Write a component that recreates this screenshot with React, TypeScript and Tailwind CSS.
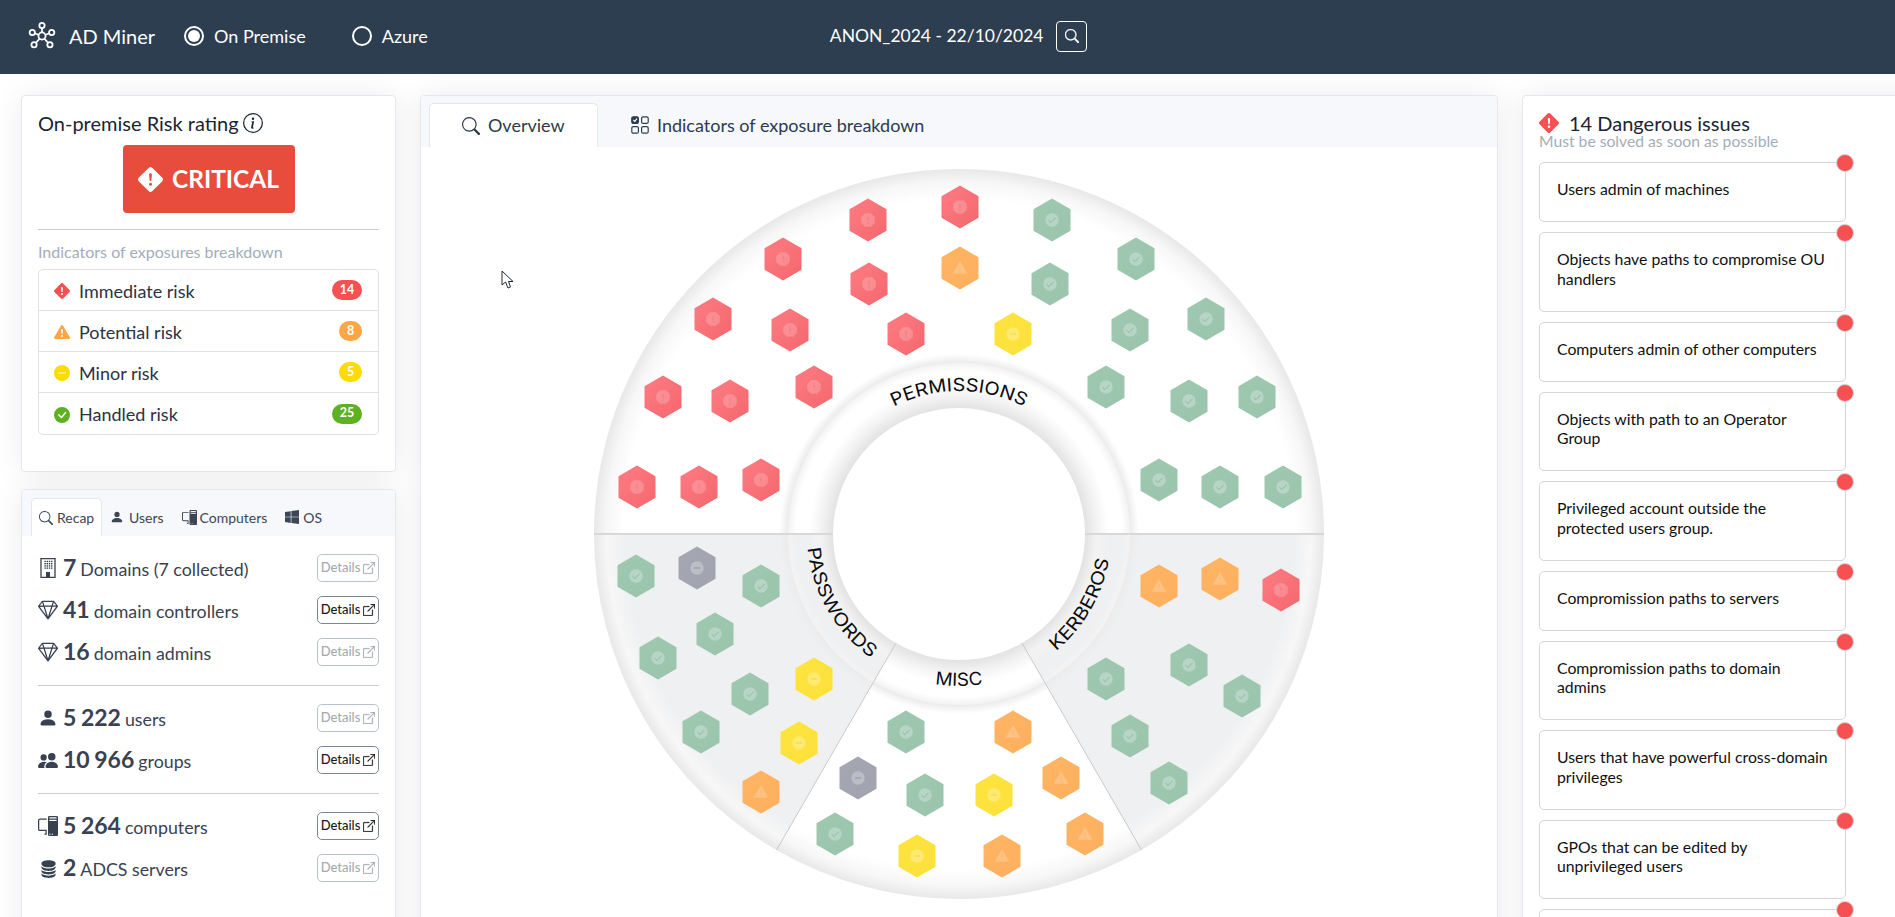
import React from "react";
import {
  BsBoxArrowUpRight, BsCheckCircleFill, BsDashCircleFill, BsDatabaseFill, BsExclamationDiamondFill,
  BsExclamationTriangleFill, BsGem, BsInfoCircle, BsPcDisplay, BsPeopleFill, BsPersonFill, BsSearch, BsWindows,
} from "react-icons/bs";

type Kind = "red" | "orange" | "yellow" | "green" | "gray";
const C = 365;
const hexes: [number, number, Kind][] = [
  [867, 220, "red"], [782, 259, "red"], [868, 284, "red"], [712, 319, "red"], [789, 330, "red"], [905, 334, "red"],
  [662, 397, "red"], [729, 401, "red"], [813, 387, "red"], [636, 487, "red"], [698, 487, "red"], [760, 480, "red"],
  [959, 207, "red"], [959, 268, "orange"], [1012, 334, "yellow"],
  [1051, 220, "green"], [1049, 284, "green"], [1135, 259, "green"], [1205, 319, "green"], [1129, 330, "green"],
  [1105, 387, "green"], [1188, 401, "green"], [1256, 397, "green"], [1158, 480, "green"], [1219, 487, "green"], [1282, 487, "green"],
  [635, 576, "green"], [696, 568, "gray"], [760, 586, "green"], [714, 634, "green"], [657, 658, "green"], [749, 694, "green"],
  [813, 679, "yellow"], [700, 732, "green"], [798, 743, "yellow"], [760, 792, "orange"],
  [905, 732, "green"], [857, 778, "gray"], [924, 795, "green"], [834, 834, "green"], [916, 856, "yellow"], [993, 795, "yellow"],
  [1012, 732, "orange"], [1060, 778, "orange"], [1084, 834, "orange"], [1001, 856, "orange"],
  [1158, 586, "orange"], [1219, 579, "orange"], [1280, 590, "red"], [1105, 679, "green"], [1188, 665, "green"],
  [1241, 696, "green"], [1129, 736, "green"], [1168, 783, "green"],
];
const dark: Record<Kind, string> = { red: "#f37a82", orange: "#f8b76f", yellow: "#f2d84a", green: "#8ebba2", gray: "#8f929e" };

function Glyph({ kind }: { kind: Kind }) {
  if (kind === "orange")
    return (
      <g>
        <path d="M0 -6.5 L7 5.5 L-7 5.5 Z" fill="#fff" opacity="0.22" strokeLinejoin="round" stroke="#fff" strokeOpacity="0.22" strokeWidth="1.5" />
        <path d="M0 -2 V2 M0 3.4 V4.6" stroke={dark.orange} strokeWidth="1" />
      </g>
    );
  if (kind === "red")
    return (
      <g>
        <path d="M-3 -6.8 H3 L6.8 -3 V3 L3 6.8 H-3 L-6.8 3 V-3 Z" fill="#fff" opacity="0.2" />
        <path d="M0 -3.4 V1 M0 2.4 V3.6" stroke={dark.red} strokeWidth="1" />
      </g>
    );
  return (
    <g>
      <circle r="6.7" fill="#fff" opacity="0.27" />
      {kind === "green" ? (
        <path d="M-3.5 0.2 L-1 2.6 L3.5 -2.2" fill="none" stroke={dark.green} strokeWidth="1" />
      ) : (
        <path d="M-3 0 H3" stroke={dark[kind]} strokeWidth="1" />
      )}
    </g>
  );
}

const rad = (d: number) => (d * Math.PI) / 180;
function sector(d0: number, d1: number, r0: number, r1: number) {
  const a0 = rad(d0);
  const a1 = rad(d1);
  const p = (r: number, a: number) => `${C + r * Math.cos(a)} ${C + r * Math.sin(a)}`;
  return `M${p(r1, a0)} A${r1} ${r1} 0 0 1 ${p(r1, a1)} L${p(r0, a1)} A${r0} ${r0} 0 0 0 ${p(r0, a0)} Z`;
}

function gradStops(base: string) {
  return (
    <>
      <stop offset={126 / C} stopColor="#e3e3e3" />
      <stop offset={138 / C} stopColor="#f3f3f3" />
      <stop offset={150 / C} stopColor={base} />
      <stop offset={163 / C} stopColor={base} />
      <stop offset={170.5 / C} stopColor="#f3f3f3" />
      <stop offset={171.5 / C} stopColor="#ececec" />
      <stop offset={180 / C} stopColor={base} />
      <stop offset={335 / C} stopColor={base} />
      <stop offset={352 / C} stopColor="#f7f7f7" />
      <stop offset={1} stopColor="#e8e8e8" />
    </>
  );
}

function Wheel() {
  const arc = (r: number, a0: number, a1: number, sweep: number) =>
    `M${C + r * Math.cos(rad(a0))} ${C + r * Math.sin(rad(a0))} A${r} ${r} 0 0 ${sweep} ${C + r * Math.cos(rad(a1))} ${C + r * Math.sin(rad(a1))}`;
  const pts = "0,-21.5 18.5,-10.7 18.5,10.7 0,21.5 -18.5,10.7 -18.5,-10.7";
  const grads: [Kind, string, string][] = [
    ["red", "#fd7c84", "#f4676c"], ["orange", "#ffb564", "#fdb05e"], ["yellow", "#fde440", "#fde03a"],
    ["green", "#9fc8b0", "#9bc4ac"], ["gray", "#a4a7b2", "#a1a4af"],
  ];
  return (
    <svg width="730" height="730" viewBox="0 0 730 730" className="shrink-0 overflow-visible">
      <defs>
        <radialGradient id="gw" gradientUnits="userSpaceOnUse" cx={C} cy={C} r={C}>{gradStops("#ffffff")}</radialGradient>
        <radialGradient id="gg" gradientUnits="userSpaceOnUse" cx={C} cy={C} r={C}>{gradStops("#eff0f2")}</radialGradient>
        {grads.map(([k, a, b]) => (
          <linearGradient key={k} id={`h-${k}`} x1="0" y1="0" x2="1" y2="1">
            <stop offset="0" stopColor={a} />
            <stop offset="1" stopColor={b} />
          </linearGradient>
        ))}
        <path id="tp" d={arc(143, 225, 315, 1)} />
        <path id="ts" d={arc(152, 195, 105, 0)} />
        <path id="tm" d={arc(152, 120, 60, 0)} />
        <path id="tk" d={arc(152, 75, -15, 0)} />
      </defs>
      <path d={sector(180, 270, 126, 365)} fill="url(#gw)" />
      <path d={sector(270, 360, 126, 365)} fill="url(#gw)" />
      <path d={sector(60, 120, 126, 365)} fill="url(#gw)" />
      <path d={sector(0, 60, 126, 365)} fill="url(#gg)" />
      <path d={sector(120, 180, 126, 365)} fill="url(#gg)" />
      <path d="M0 365 H239 M491 365 H730" stroke="#d8d8d8" strokeWidth="2" />
      <path d={`M${C - 63} ${C + 109.1} L${C - 182.5} ${C + 316} M${C + 63} ${C + 109.1} L${C + 182.5} ${C + 316}`} stroke="#c9c9c9" strokeWidth="1" />
      {hexes.map(([x, y, k], i) => (
        <g key={i} transform={`translate(${x - 593} ${y - 169})`}>
          <polygon points={pts} fill={`url(#h-${k})`} />
          <Glyph kind={k} />
        </g>
      ))}
      <g fontFamily="Inter, 'Open Sans', sans-serif" fontSize="18" fill="#0b0b0f" textAnchor="middle">
        <text><textPath href="#tp" startOffset="50%" textLength="135" lengthAdjust="spacingAndGlyphs">PERMISSIONS</textPath></text>
        <text><textPath href="#ts" startOffset="50%" textLength="131" lengthAdjust="spacingAndGlyphs">PASSWORDS</textPath></text>
        <text><textPath href="#tm" startOffset="50%" textLength="48" lengthAdjust="spacingAndGlyphs">MISC</textPath></text>
        <text><textPath href="#tk" startOffset="50%" textLength="108" lengthAdjust="spacingAndGlyphs">KERBEROS</textPath></text>
      </g>
    </svg>
  );
}

function Logo() {
  const sats: [number, number][] = [[17, 4], [6, 12], [28, 12], [8, 26], [26, 26]];
  return (
    <svg width="30" height="30" viewBox="0 0 34 32" fill="none" stroke="#fff" strokeWidth="2">
      {sats.map(([x, y], i) => (
        <g key={i}>
          <line x1="17" y1="16" x2={x} y2={y} />
          <circle cx={x} cy={y} r="3" fill="#2c3e50" />
        </g>
      ))}
      <circle cx="17" cy="16" r="4" fill="#2c3e50" />
    </svg>
  );
}

function BuildingIcon() {
  const dots = [];
  for (let r = 0; r < 4; r++) for (let c = 0; c < 4; c++) dots.push(<rect key={`${r}${c}`} x={4.4 + c * 2.2} y={2.8 + r * 2.2} width="1.4" height="1.4" />);
  return (
    <svg width="16" height="20" viewBox="0 0 16 20" fill="#374151">
      <path d="M1 .7 H15 V19.3 H1 Z" fill="none" stroke="#374151" strokeWidth="1.3" />
      {dots}
      <rect x="6" y="14" width="4" height="5.5" />
    </svg>
  );
}

function BoxesIcon() {
  return (
    <svg width="18" height="18" viewBox="0 0 18 18" fill="none" stroke="#2c3e50" strokeWidth="1.2" className="shrink-0">
      <rect x=".8" y=".8" width="6.6" height="6.6" rx="1.5" fill="#2c3e50" />
      <path d="M2.4 4 L3.8 5.4 L6 2.7" stroke="#fff" />
      <rect x="10.6" y=".8" width="6.6" height="6.6" rx="1.5" />
      <rect x=".8" y="10.6" width="6.6" height="6.6" rx="1.5" />
      <rect x="10.6" y="10.6" width="6.6" height="6.6" rx="1.5" />
    </svg>
  );
}

function Details({ on }: { on?: boolean }) {
  return (
    <button className={`ml-auto flex h-[28px] w-[62px] shrink-0 items-center justify-center gap-[3px] rounded-[5px] border border-[#7b8794] bg-white text-[13px] font-medium ${on ? "text-[#1a1a1a]" : "opacity-50 text-[#4b5563]"}`}>
      Details <BsBoxArrowUpRight className="h-[12px] w-[12px]" strokeWidth="0.4" />
    </button>
  );
}

function StatRow({ icon, num, label, on }: { icon: React.ReactNode; num: string; label: string; on?: boolean }) {
  return (
    <div className="flex h-[42px] items-center">
      <span className="flex w-[20px] shrink-0 justify-center text-[#374151]">{icon}</span>
      <span className="ml-[5px] flex items-baseline gap-[4px] pb-[2px] whitespace-nowrap text-[#3a4151]">
        <span className="text-[23px] leading-none font-bold [word-spacing:-1px]">{num}</span>
        <span className="text-[17.8px] leading-none">{label}</span>
      </span>
      <Details on={on} />
    </div>
  );
}

function RiskRow({ icon, label, n, color, last }: { icon: React.ReactNode; label: string; n: string; color: string; last?: boolean }) {
  return (
    <div className={`flex h-[41px] items-center pr-[16px] pl-[15px] text-[18px] text-[#2b3242] ${last ? "" : "border-b border-[#dfe1e6]"}`}>
      <span className="mr-[9px] flex w-[16px] justify-center pt-[2px]">{icon}</span>
      <span className="pt-[2px]">{label}</span>
      <span style={{ backgroundColor: color }} className={`ml-auto flex h-[20px] items-center justify-center rounded-full text-[12.5px] font-bold text-white ${n.length > 1 ? "w-[30px]" : "w-[23px]"}`}>{n}</span>
    </div>
  );
}

const issues = [
  "Users admin of machines",
  "Objects have paths to compromise OU handlers",
  "Computers admin of other computers",
  "Objects with path to an Operator Group",
  "Privileged account outside the protected users group.",
  "Compromission paths to servers",
  "Compromission paths to domain admins",
  "Users that have powerful cross-domain privileges",
  "GPOs that can be edited by unprivileged users",
  "",
];

const card = "rounded-[4px] border border-[#e4e7ee] bg-white shadow-[0_0_30px_rgba(0,0,0,0.08)]";

export default function App() {
  return (
    <div className="relative h-[917px] overflow-hidden bg-white font-['Lato','Noto_Sans',sans-serif] text-[#1e293b]">
      <header className="flex h-[74px] items-center bg-[#2c3e50] pb-[2px] pl-[27px] text-white">
        <Logo />
        <span className="ml-[12px] text-[20px]">AD Miner</span>
        <span className="ml-[29px] flex h-[20px] w-[20px] items-center justify-center rounded-full border-2 border-white">
          <span className="h-[12px] w-[12px] rounded-full bg-white" />
        </span>
        <span className="ml-[10px] text-[18px]">On Premise</span>
        <span className="ml-[46px] h-[20px] w-[20px] rounded-full border-2 border-white" />
        <span className="ml-[10px] text-[18px]">Azure</span>
        <span className="ml-[402px] text-[17.5px]">ANON_2024 - 22/10/2024</span>
        <button className="ml-[13px] flex h-[31px] w-[31px] items-center justify-center rounded-[4px] border border-white">
          <BsSearch className="h-[14px] w-[14px]" strokeWidth="0.5" />
        </button>
      </header>

      <main className="flex items-start pt-[21px] pl-[21px]">
        <div className="flex w-[375px] shrink-0 flex-col gap-[17px]">
          <section className={`${card} h-[377px] px-[16px] pt-[13px]`}>
            <div className="flex h-[28px] items-center gap-[4px] text-[20px] whitespace-nowrap text-[#1a2433]">
              On-premise Risk rating <BsInfoCircle className="h-[20px] w-[20px]" />
            </div>
            <div className="mx-auto mt-[8px] flex h-[68px] w-[172px] items-center justify-center gap-[9px] rounded-[4px] bg-[#e74c3c] text-[24.5px] font-bold text-white">
              <BsExclamationDiamondFill className="h-[25px] w-[25px]" />
              CRITICAL
            </div>
            <div className="mt-[16px] border-t border-[#c9ccd1]" />
            <div className="mt-[12px] flex h-[20px] items-center text-[16px] text-[#a3adb8]">Indicators of exposures breakdown</div>
            <div className="mt-[7px] rounded-[5px] border border-[#dfe1e6]">
              <RiskRow icon={<BsExclamationDiamondFill className="h-[16px] w-[16px] text-[#f65052]" />} label="Immediate risk" n="14" color="#f65052" />
              <RiskRow icon={<BsExclamationTriangleFill className="h-[16px] w-[16px] text-[#fda648]" />} label="Potential risk" n="8" color="#fda648" />
              <RiskRow icon={<BsDashCircleFill className="h-[16px] w-[16px] text-[#fedc02]" />} label="Minor risk" n="5" color="#fedc02" />
              <RiskRow icon={<BsCheckCircleFill className="h-[16px] w-[16px] text-[#5eb122]" />} label="Handled risk" n="25" color="#5eb122" last />
            </div>
          </section>

          <section className={`${card} h-[460px] overflow-hidden`}>
            <div className="flex h-[46px] items-end bg-[#f7f8fb] pl-[9px] text-[14px] text-[#3d4654]">
              <div className="flex h-[38px] w-[71px] items-center gap-[4px] rounded-t-[5px] border border-b-0 border-[#e4e7ee] bg-white pl-[7px]">
                <BsSearch className="h-[14px] w-[14px]" />Recap
              </div>
              <div className="flex h-[38px] items-center gap-[5px] pl-[8px]"><BsPersonFill className="h-[14px] w-[14px]" />Users</div>
              <div className="ml-[18px] flex h-[38px] items-center gap-[3px]"><BsPcDisplay className="h-[15px] w-[15px]" />Computers</div>
              <div className="ml-[18px] flex h-[38px] items-center gap-[4px]"><BsWindows className="h-[14px] w-[14px]" />OS</div>
            </div>
            <div className="px-[16px] pt-[11px]">
              <StatRow icon={<BuildingIcon />} num="7" label="Domains (7 collected)" />
              <StatRow icon={<BsGem className="h-[20px] w-[20px]" />} num="41" label="domain controllers" on />
              <StatRow icon={<BsGem className="h-[20px] w-[20px]" />} num="16" label="domain admins" />
              <div className="mt-[12px] mb-[11px] border-t border-[#c9ccd1]" />
              <StatRow icon={<BsPersonFill className="h-[22px] w-[22px]" />} num="5 222" label="users" />
              <StatRow icon={<BsPeopleFill className="h-[21px] w-[21px]" />} num="10 966" label="groups" on />
              <div className="mt-[12px] mb-[11px] border-t border-[#c9ccd1]" />
              <StatRow icon={<BsPcDisplay className="h-[20px] w-[20px]" />} num="5 264" label="computers" on />
              <StatRow icon={<BsDatabaseFill className="h-[19px] w-[19px]" />} num="2" label="ADCS servers" />
            </div>
          </section>
        </div>

        <section className={`${card} ml-[24px] flex h-[860px] w-[1078px] shrink-0 flex-col overflow-hidden`}>
          <div className="flex h-[51px] shrink-0 items-end bg-[#f7f8fb] pl-[8px] text-[18px] text-[#2c3a4d]">
            <div className="flex h-[44px] w-[169px] items-center gap-[8px] rounded-t-[5px] border border-b-0 border-[#e4e7ee] bg-white pl-[32px]">
              <BsSearch className="h-[18px] w-[18px]" />Overview
            </div>
            <div className="ml-[33px] flex h-[44px] items-center gap-[8px]"><BoxesIcon />Indicators of exposure breakdown</div>
          </div>
          <div className="flex justify-center pt-[22px]">
            <Wheel />
          </div>
        </section>

        <section className={`${card} ml-[24px] h-[860px] w-[400px] shrink-0 overflow-hidden pt-[17px] pl-[16px]`}>
          <div className="flex h-[20px] items-center gap-[10px] text-[20px] text-[#1a2433]">
            <BsExclamationDiamondFill className="h-[20px] w-[20px] text-[#f65052]" />14 Dangerous issues
          </div>
          <div className="h-[16px] text-[15.7px] leading-[16px] text-[#a3adb8]">Must be solved as soon as possible</div>
          <div className="mt-[13px] flex w-[307px] flex-col gap-[10px]">
            {issues.map((t, i) => (
              <div key={i} className="relative rounded-[5px] border border-[#d6d6d6] pt-[16px] pr-[16px] pb-[22.5px] pl-[17px] text-[15.8px] leading-[19.5px] text-[#101010]">
                <div className="min-h-[19.5px]">{t}</div>
                <span className="absolute -top-[9px] -right-[9px] h-[18px] w-[18px] rounded-full border border-[#d9d9d9] bg-[#f65052]" />
              </div>
            ))}
          </div>
        </section>
      </main>

      <svg className="absolute top-[270px] left-[501px]" width="14" height="20" viewBox="0 0 14 20" fill="#fff" stroke="#1f2937" strokeWidth="1">
        <path d="M1 1 V15 L4.5 12 L7 18 L9.5 17 L7.5 11.5 L12 11.5 Z" />
      </svg>
    </div>
  );
}
